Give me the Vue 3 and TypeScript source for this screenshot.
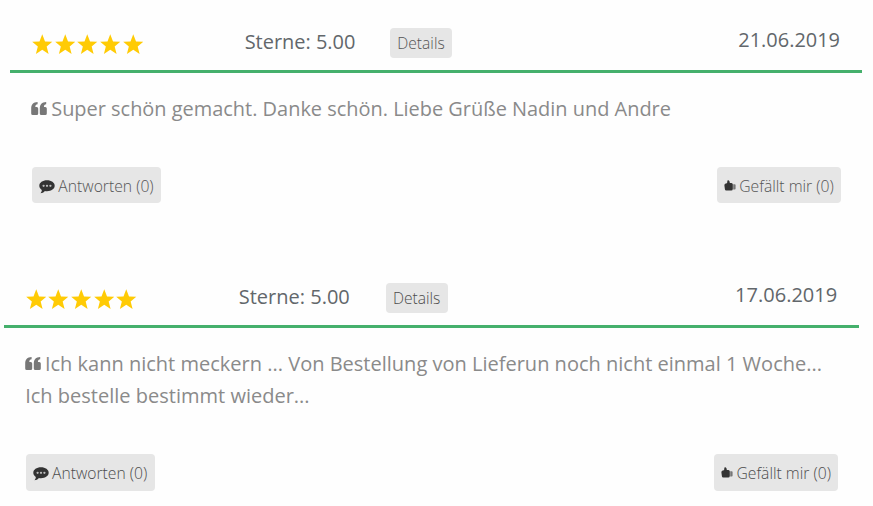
<script setup lang="ts">
interface Review {
  id: string
  stars: number
  rating: string
  date: string
  lines: string[]
  replies: number
  likes: number
}

const reviews: Review[] = [
  {
    id: 'first',
    stars: 5,
    rating: '5.00',
    date: '21.06.2019',
    lines: ['Super schön gemacht. Danke schön. Liebe Grüße Nadin und Andre'],
    replies: 0,
    likes: 0,
  },
  {
    id: 'second',
    stars: 5,
    rating: '5.00',
    date: '17.06.2019',
    lines: [
      'Ich kann nicht meckern ... Von Bestellung von Lieferun noch nicht einmal 1 Woche...',
      'Ich bestelle bestimmt wieder...',
    ],
    replies: 0,
    likes: 0,
  },
]
</script>

<template>
  <main class="reviews">
    <article v-for="r in reviews" :key="r.id" class="review" :class="r.id">
      <header class="head">
        <div class="stars">
          <svg v-for="n in r.stars" :key="n" class="star" viewBox="0 0 20 20">
            <path d="M10 .2 12.700 7.200 19.800 7.500 14.300 12.100 16.200 19.500 10 15.400 3.800 19.500 5.700 12.100.2 7.500 7.300 7.200Z" />
          </svg>
        </div>
        <div class="rating">Sterne: {{ r.rating }}</div>
        <button class="btn details" type="button"><span>Details</span></button>
        <time class="date">{{ r.date }}</time>
      </header>
      <blockquote class="quote">
        <div v-for="(line, i) in r.lines" :key="i" class="line">
          <svg v-if="i === 0" class="mark" viewBox="0 0 16 13">
            <path d="M6.600 0V2.300C5 2.500 4.300 3.400 4.300 5H5.700Q7.200 5 7.200 6.500V11.500Q7.200 13 5.700 13H1.700Q.2 13 .2 11.500V6.300C.2 2.600 2.300 .1 6.600 0ZM15.200 0V2.300C13.600 2.500 12.900 3.400 12.900 5H14.300Q15.800 5 15.800 6.500V11.500Q15.800 13 14.300 13H10.300Q8.800 13 8.800 11.500V6.300C8.800 2.600 10.900 .1 15.200 0Z" />
          </svg>
          <span>{{ line }}</span>
        </div>
      </blockquote>
      <footer class="actions">
        <button class="btn reply" type="button">
          <svg class="bubble" viewBox="0 0 16 14">
            <path d="M8 .3C12.400 .3 15.700 2.700 15.700 5.800S12.400 11.200 8 11.200C7.200 11.200 6.500 11.200 5.900 11 4.700 12.400 3.200 13.200 1.500 13.300 2.300 12.400 2.800 11.500 2.800 10 1.200 9 .3 7.500 .3 5.800 .3 2.700 3.600 .3 8 .3Z" />
            <g class="dots">
              <circle cx="4.600" cy="5.800" r="1.150" />
              <circle cx="8" cy="5.800" r="1.150" />
              <circle cx="11.400" cy="5.800" r="1.150" />
            </g>
          </svg>
          <span>Antworten ({{ r.replies }})</span>
        </button>
        <button class="btn like" type="button">
          <svg class="thumb" viewBox="0 0 12 11">
            <path d="M4.100 .2C5.400 .3 5.800 1.600 5.800 2.900H7.500Q8.700 3.100 8.800 4.200V9Q8.700 10.500 7.300 10.600H2.300Q1 10.400 .9 9.200L.4 5.500Q.2 4 1.700 3.500L2.900 3.300Q3.500 2.300 3.300.8Z" />
            <path class="cuff" d="M9.200 4.200H10.700Q11.600 4.200 11.600 5.100V8.600Q11.600 9.500 10.700 9.500H9.200Z" />
          </svg>
          <span>Gefällt mir ({{ r.likes }})</span>
        </button>
      </footer>
    </article>
  </main>
</template>

<style>
body {
  margin: 0;
  background: #fff;
}
</style>

<style scoped>
.reviews {
  width: 873px;
  height: 506px;
  overflow: hidden;
  font-family: "Open Sans", "Noto Sans", sans-serif;
  background: #fefefe;
}
.review {
  box-sizing: border-box;
}
.first {
  width: 851.500px;
  height: 255px;
  margin-left: 10px;
  font-size: 19.940px;
}
.second {
  width: 855px;
  margin-left: 3.700px;
  font-size: 20.030px;
}
.head {
  box-sizing: border-box;
  height: 72.600px;
  display: grid;
  grid-template-columns: 213px 145.400px 62px 1fr;
  align-items: start;
  padding: 28px 21.500px 0 22px;
  border-bottom: 3px solid #45b06c;
  color: #62676b;
  line-height: 27px;
}
.first .head {
  grid-template-columns: 212.700px 145.300px 62px 1fr;
}
.second .head {
  grid-template-columns: 213px 147px 62px 1fr;
}
.stars {
  display: flex;
  gap: 2.200px;
  padding-top: 5.500px;
}
.star {
  width: 20.500px;
  height: 20.500px;
  fill: #ffcb05;
}
.date {
  text-align: right;
  margin-top: -2px;
}
.btn {
  display: flex;
  align-items: center;
  justify-content: center;
  box-sizing: border-box;
  height: 36px;
  margin: 0;
  padding: 2px 0 0;
  border: 0;
  border-radius: 4px;
  background: #e6e6e6;
  color: #555;
  font-family: inherit;
  font-size: 15.700px;
  font-weight: 300;
  white-space: nowrap;
}
.details {
  width: 62px;
  height: 29.500px;
  padding-top: 0;
  font-size: 15.600px;
}
.quote {
  margin: 0;
  padding: 20px 0 0 21.500px;
  color: #8a8a8a;
  line-height: 31.500px;
}
.line {
  display: flex;
  align-items: center;
  white-space: nowrap;
}
.line + .line {
  padding-top: .6px;
}
.mark {
  width: 16px;
  height: 13px;
  margin: 1px 4px 0 -.3px;
  fill: #777;
}
.actions {
  display: flex;
  justify-content: space-between;
  padding: 43px 20.500px 0 22px;
}
.reply {
  width: 129px;
}
.like {
  width: 124px;
}
.second .btn {
  color: #4c4c4c;
}
.second .reply,
.second .like {
  height: 36.500px;
}
.bubble {
  width: 16px;
  height: 14px;
  margin: 1px 3px 0 0;
  fill: #333;
}
.dots {
  fill: #bbb;
}
.thumb {
  width: 12px;
  height: 11px;
  margin: 0 3px 1px 0;
  fill: #333;
}
.cuff {
  fill: #777;
}
</style>
